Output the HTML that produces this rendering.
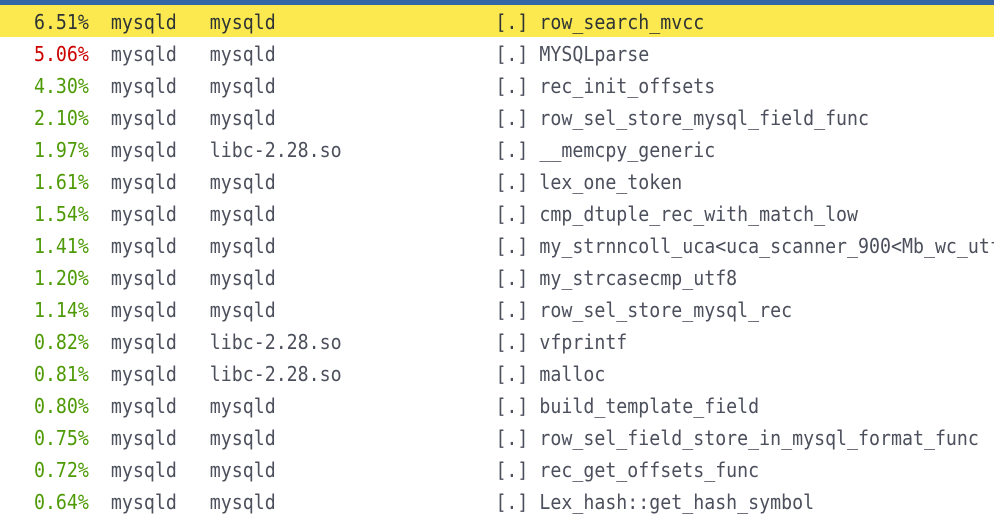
<!DOCTYPE html><html><head><style>
body{margin:0;width:994px;height:524px;background:#fff;overflow:hidden;font-family:"DejaVu Sans Mono",monospace;font-size:18.25px;}
.bar{height:5px;background:#3465a4;}
.r{height:32px;line-height:37px;white-space:pre;padding-left:1px;color:#4c505c;overflow:hidden;}
.r span.t{display:inline-block;transform:scaleY(1.1);transform-origin:0 60%;}
.h{background:#fce94f;color:#2e3436;}
.g{color:#4e9a06}.red{color:#cc0000}
</style></head><body><div class="bar"></div>
<div class="r h"><span class="t">   6.51%  mysqld   mysqld                    [.] row_search_mvcc</span></div>
<div class="r"><span class="t"><span class="red">   5.06%</span>  mysqld   mysqld                    [.] MYSQLparse</span></div>
<div class="r"><span class="t"><span class="g">   4.30%</span>  mysqld   mysqld                    [.] rec_init_offsets</span></div>
<div class="r"><span class="t"><span class="g">   2.10%</span>  mysqld   mysqld                    [.] row_sel_store_mysql_field_func</span></div>
<div class="r"><span class="t"><span class="g">   1.97%</span>  mysqld   libc-2.28.so              [.] __memcpy_generic</span></div>
<div class="r"><span class="t"><span class="g">   1.61%</span>  mysqld   mysqld                    [.] lex_one_token</span></div>
<div class="r"><span class="t"><span class="g">   1.54%</span>  mysqld   mysqld                    [.] cmp_dtuple_rec_with_match_low</span></div>
<div class="r"><span class="t"><span class="g">   1.41%</span>  mysqld   mysqld                    [.] my_strnncoll_uca&lt;uca_scanner_900&lt;Mb_wc_utf8</span></div>
<div class="r"><span class="t"><span class="g">   1.20%</span>  mysqld   mysqld                    [.] my_strcasecmp_utf8</span></div>
<div class="r"><span class="t"><span class="g">   1.14%</span>  mysqld   mysqld                    [.] row_sel_store_mysql_rec</span></div>
<div class="r"><span class="t"><span class="g">   0.82%</span>  mysqld   libc-2.28.so              [.] vfprintf</span></div>
<div class="r"><span class="t"><span class="g">   0.81%</span>  mysqld   libc-2.28.so              [.] malloc</span></div>
<div class="r"><span class="t"><span class="g">   0.80%</span>  mysqld   mysqld                    [.] build_template_field</span></div>
<div class="r"><span class="t"><span class="g">   0.75%</span>  mysqld   mysqld                    [.] row_sel_field_store_in_mysql_format_func</span></div>
<div class="r"><span class="t"><span class="g">   0.72%</span>  mysqld   mysqld                    [.] rec_get_offsets_func</span></div>
<div class="r"><span class="t"><span class="g">   0.64%</span>  mysqld   mysqld                    [.] Lex_hash::get_hash_symbol</span></div>
</body></html>
